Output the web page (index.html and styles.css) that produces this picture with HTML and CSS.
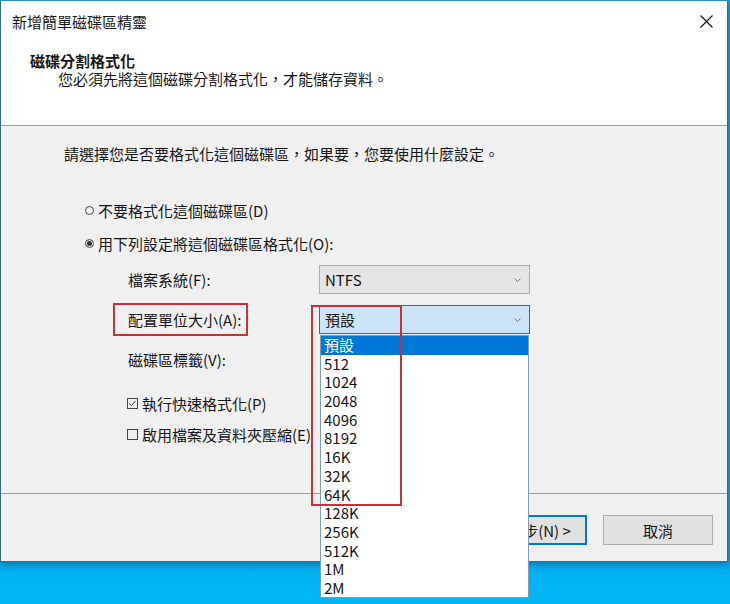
FILE: index.html
```html
<!DOCTYPE html>
<html lang="zh-TW">
<head>
<meta charset="utf-8">
<title>新增簡單磁碟區精靈</title>
<link rel="stylesheet" href="styles.css">
</head>
<body>
<div class="window">
  <div class="titlebar">
    <span class="title">新增簡單磁碟區精靈</span>
    <svg class="close" width="13" height="13" viewBox="0 0 13 13"><path d="M0.5 0.5L12.5 12.5M12.5 0.5L0.5 12.5" stroke="#111" stroke-width="1.1" fill="none"/></svg>
  </div>
  <div class="header">
    <div class="h-title">磁碟分割格式化</div>
    <div class="h-sub">您必須先將這個磁碟分割格式化，才能儲存資料。</div>
  </div>
  <div class="content">
    <p class="intro">請選擇您是否要格式化這個磁碟區，如果要，您要使用什麼設定。</p>
    <div class="options">
      <div class="opt"><span class="radio"></span>不要格式化這個磁碟區(D)</div>
      <div class="opt opt2"><span class="radio on"></span>用下列設定將這個磁碟區格式化(O):</div>
      <div class="form">
        <span class="lbl">檔案系統(F):</span>
        <div class="combo"><span>NTFS</span><svg class="chev" width="7" height="4" viewBox="0 0 7 4"><path d="M0.5 0.5L3.5 3.5L6.5 0.5" stroke="#777" fill="none"/></svg></div>
        <span class="lbl">配置單位大小(A):</span>
        <div class="combo focus"><span>預設</span><svg class="chev" width="7" height="4" viewBox="0 0 7 4"><path d="M0.5 0.5L3.5 3.5L6.5 0.5" stroke="#777" fill="none"/></svg></div>
        <span class="lbl">磁碟區標籤(V):</span>
        <div class="textbox"></div>
      </div>
      <div class="chk chk1"><span class="box"><svg width="9" height="9" viewBox="0 0 9 9"><path d="M1.5 4.5L3.5 6.5L7.5 2" stroke="#333" stroke-width="1" fill="none"/></svg></span>執行快速格式化(P)</div>
      <div class="chk chk2"><span class="box"></span>啟用檔案及資料夾壓縮(E)</div>
    </div>
  </div>
  <div class="footer">
    <button class="btn">&lt; 上一步(B)</button>
    <button class="btn default">下一步(N) &gt;</button>
    <button class="btn cancel">取消</button>
  </div>

  <ul class="droplist">
    <li class="sel">預設</li>
    <li>512</li>
    <li>1024</li>
    <li>2048</li>
    <li>4096</li>
    <li>8192</li>
    <li>16K</li>
    <li>32K</li>
    <li>64K</li>
    <li>128K</li>
    <li>256K</li>
    <li>512K</li>
    <li>1M</li>
    <li>2M</li>
  </ul>
  <div class="mark mark-label"></div>
  <div class="mark mark-list"></div>
</div>
</body>
</html>
```

FILE: styles.css
```css
* { box-sizing: border-box; }

html, body {
  margin: 0;
  padding: 0;
}

body {
  width: 730px;
  height: 604px;
  overflow: hidden;
  background: linear-gradient(#0d9fdd 0, #0d9fdd 558px, #02b3f3 575px, #02b6f6 604px);
  font-family: "Noto Sans CJK TC", "Noto Sans", sans-serif;
  font-size: 15px;
  color: #151515;
}

.window {
  position: relative;
  width: 728px;
  height: 562px;
  border: 1px solid #2a6c9c;
  border-top-color: #2b8ad2;
  background: #f0f0f0;
  display: flex;
  flex-direction: column;
  box-shadow: 0 2px 6px rgba(0, 40, 80, 0.35);
}

.titlebar {
  height: 40px;
  background: #fff;
  display: flex;
  align-items: center;
  justify-content: space-between;
  padding: 0 14px 0 11px;
}

.title {
  line-height: 19px;
}

.close {
  display: block;
}

.header {
  height: 85px;
  background: #fff;
  border-bottom: 1px solid #a0a0a0;
  padding: 11px 0 0 29px;
  line-height: 18px;
}

.h-title {
  font-weight: bold;
}

.h-sub {
  padding-left: 28px;
}

.content {
  flex: 1;
  padding: 18px 0 0 63px;
  line-height: 19px;
}

.intro {
  margin: 0;
}

.options {
  margin-top: 38px;
  padding-left: 21px;
}

.opt {
  display: flex;
  align-items: center;
  height: 19px;
}

.opt2 {
  margin-top: 14px;
}

.radio {
  width: 9px;
  height: 9px;
  border: 1px solid #444;
  border-radius: 50%;
  margin-right: 4px;
  display: flex;
  align-items: center;
  justify-content: center;
}

.radio.on::after {
  content: "";
  width: 5px;
  height: 5px;
  border-radius: 50%;
  background: #333;
}

.form {
  margin: 12px 0 0 43px;
  display: grid;
  grid-template-columns: 191px 211px;
  grid-auto-rows: 29px;
  row-gap: 11px;
  align-items: center;
}

.combo {
  height: 29px;
  border: 1px solid #adadad;
  background: #e5e5e5;
  display: flex;
  align-items: center;
  justify-content: space-between;
  padding: 0 8px 0 5px;
}

.combo.focus {
  background: #cce4f7;
  border-color: #0078d7;
}

.chev {
  display: block;
}

.textbox {
  height: 29px;
}

.chk {
  display: flex;
  align-items: center;
  height: 19px;
  margin-left: 42px;
}

.chk1 {
  margin-top: 20px;
}

.chk2 {
  margin-top: 12px;
}

.box {
  width: 11px;
  height: 11px;
  border: 1px solid #444;
  margin-right: 4px;
  display: flex;
  align-items: center;
  justify-content: center;
}

.box svg {
  display: block;
}

.footer {
  height: 68px;
  border-top: 1px solid #a0a0a0;
  display: flex;
  align-items: flex-start;
  justify-content: flex-end;
  padding: 21px 14px 0 0;
}

.btn {
  width: 110px;
  height: 30px;
  border: 1px solid #adadad;
  background: #e1e1e1;
  font-family: inherit;
  font-size: 15px;
  color: #151515;
  padding: 0;
  line-height: 19px;
}

.btn.default {
  border-color: #0078d7;
  box-shadow: inset 0 0 0 1px #0078d7;
}

.btn.cancel {
  margin-left: 16px;
}

.droplist {
  position: absolute;
  left: 319px;
  top: 334px;
  width: 209px;
  height: 263px;
  margin: 0;
  padding: 0;
  list-style: none;
  background: #fff;
  border: 1px solid #7d9bbd;
}

.droplist li {
  height: 18.7px;
  line-height: 18.7px;
  padding-left: 3px;
  color: #151515;
}

.droplist li.sel {
  background: #0078d7;
  color: #fff;
}

.mark {
  position: absolute;
  border: 2px solid #c9303a;
}

.mark-label {
  left: 112px;
  top: 302px;
  width: 135px;
  height: 33px;
}

.mark-list {
  left: 310px;
  top: 304px;
  width: 91px;
  height: 201px;
}
```
